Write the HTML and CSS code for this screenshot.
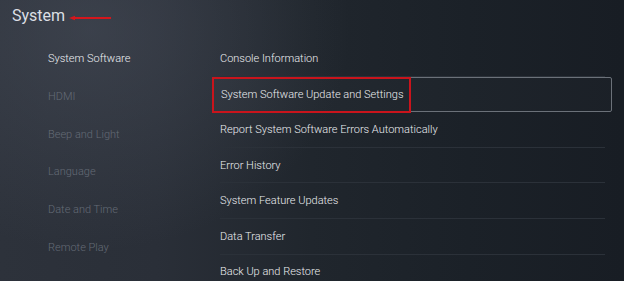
FILE: index.html
```html
<!DOCTYPE html>
<html>
<head>
<meta charset="utf-8">
<link rel="stylesheet" href="styles.css">
</head>
<body>
<div class="screen">
  <header class="top">
    <h1 class="title">System</h1>
    <svg class="arrow" width="44" height="8" viewBox="0 0 44 8">
      <polygon points="0,4 6,1.8 6,6.2" fill="#d4161c"/>
      <rect x="4" y="3" width="38" height="2" fill="#d4161c"/>
    </svg>
  </header>
  <div class="body">
    <nav class="side">
      <div class="side-item active">System Software</div>
      <div class="side-item">HDMI</div>
      <div class="side-item">Beep and Light</div>
      <div class="side-item">Language</div>
      <div class="side-item">Date and Time</div>
      <div class="side-item">Remote Play</div>
      <div class="side-item">Power Saving</div>
    </nav>
    <main class="list">
      <div class="row"><span class="label">Console Information</span></div>
      <div class="row selected"><span class="label">System Software Update and Settings</span><span class="mark"></span></div>
      <div class="row"><span class="label">Report System Software Errors Automatically</span></div>
      <div class="row"><span class="label">Error History</span></div>
      <div class="row"><span class="label">System Feature Updates</span></div>
      <div class="row"><span class="label">Data Transfer</span></div>
      <div class="row"><span class="label">Back Up and Restore</span></div>
    </main>
  </div>
</div>
</body>
</html>
```

FILE: styles.css
```css
html, body {
  margin: 0;
  padding: 0;
  width: 624px;
  height: 281px;
  overflow: hidden;
}
.screen {
  width: 624px;
  height: 281px;
  overflow: hidden;
  font-family: Roboto, "Open Sans", sans-serif;
  background:
    radial-gradient(ellipse 260px 220px at 90px 30px, rgba(72,78,90,0.55), rgba(72,78,90,0) 100%),
    linear-gradient(90deg, #2d323b 0%, #2a2f38 25%, #20262d 50%, #1b2128 75%, #181d24 100%);
}
.top {
  display: flex;
  align-items: center;
  height: 32px;
  padding-left: 12px;
}
.title {
  margin: 0;
  font-size: 16px;
  font-weight: 400;
  color: #dcdfe4;
  line-height: 26px;
}
.arrow {
  margin-left: 4px;
  margin-top: 4px;
}
.body {
  display: flex;
  margin-top: 7px;
}
.side {
  width: 164px;
  padding-left: 48px;
  margin-top: 1px;
  display: flex;
  flex-direction: column;
}
.side-item {
  height: 37.8px;
  line-height: 37.8px;
  font-size: 11px;
  font-weight: 300;
  color: #646b76;
  white-space: nowrap;
}
.side-item.active {
  color: #eef0f3;
}
.list {
  width: 400px;
  margin-top: 2px;
  display: flex;
  flex-direction: column;
}
.row {
  position: relative;
  box-sizing: border-box;
  height: 35.6px;
  margin: 0 7px 0 8px;
  border-bottom: 1px solid #2b3139;
  display: flex;
  align-items: center;
  font-size: 11px;
  font-weight: 300;
  color: #eceef1;
  white-space: nowrap;
}
.row.selected {
  margin: 0;
  padding-left: 8px;
  border: 1.5px solid #6b7179;
  border-radius: 2px;
  background: rgba(255,255,255,0.015);
}
.mark {
  position: absolute;
  left: -1.5px;
  top: -0.5px;
  width: 199px;
  height: 36px;
  box-sizing: border-box;
  border: 2px solid #c9141c;
}
```
